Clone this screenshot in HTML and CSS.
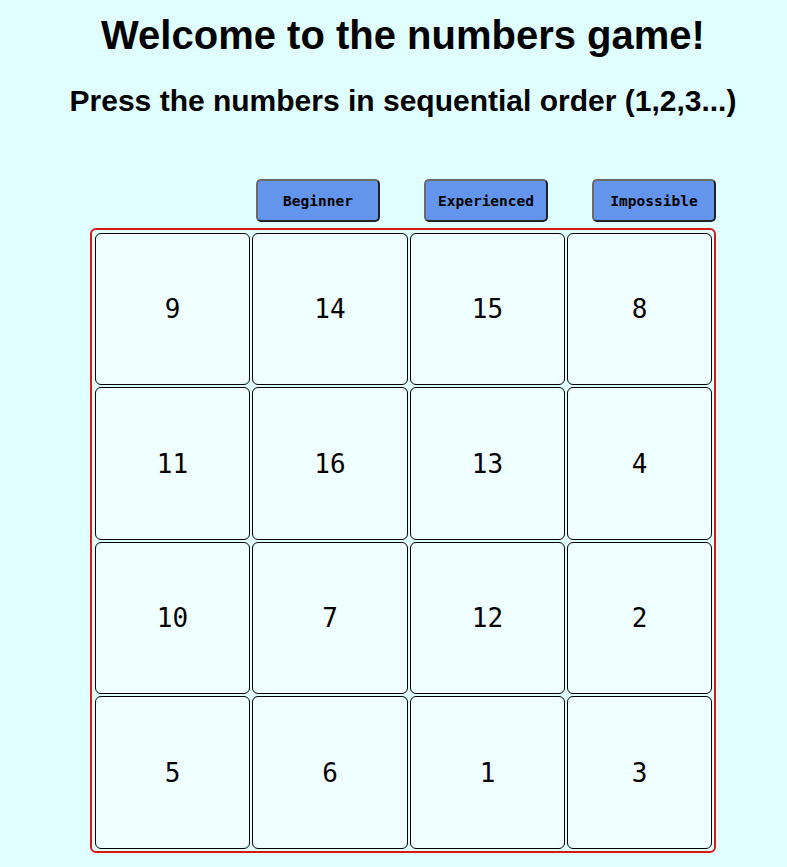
FILE: index.html
```html
<!DOCTYPE html>
<html>
<head>
<meta charset="utf-8">
<link rel="stylesheet" href="styles.css">
</head>
<body>
<div class="page">
  <h1 class="title">Welcome to the numbers game!</h1>
  <h2 class="subtitle">Press the numbers in sequential order (1,2,3...)</h2>
  <div class="levels">
    <button class="level">Beginner</button>
    <button class="level">Experienced</button>
    <button class="level">Impossible</button>
  </div>
  <div class="board">
    <div class="tile">9</div>
    <div class="tile">14</div>
    <div class="tile">15</div>
    <div class="tile">8</div>
    <div class="tile">11</div>
    <div class="tile">16</div>
    <div class="tile">13</div>
    <div class="tile">4</div>
    <div class="tile">10</div>
    <div class="tile">7</div>
    <div class="tile">12</div>
    <div class="tile">2</div>
    <div class="tile">5</div>
    <div class="tile">6</div>
    <div class="tile">1</div>
    <div class="tile">3</div>
  </div>
</div>
</body>
</html>
```

FILE: styles.css
```css
html, body {
  margin: 0;
  background: #e0ffff;
}
body {
  padding: 12px 0 0 19px;
  font-family: "Liberation Sans", Arial, sans-serif;
  color: #000;
}
.page {
  display: flex;
  flex-direction: column;
  align-items: center;
}
.title {
  margin: 0;
  font-size: 40px;
  line-height: 46px;
  font-weight: bold;
}
.subtitle {
  margin: 26px 0 0;
  font-size: 30px;
  line-height: 34px;
  font-weight: bold;
}
.levels {
  margin-top: 61px;
  width: 626px;
  display: flex;
  justify-content: flex-end;
  gap: 44px;
}
.level {
  width: 124px;
  height: 43px;
  margin: 0;
  padding: 0;
  background: #6495ed;
  border: 2px solid;
  border-color: #6a6a6a #222 #222 #6a6a6a;
  border-radius: 5px;
  font-family: "DejaVu Sans Mono", Consolas, monospace;
  font-weight: bold;
  font-size: 14.5px;
  color: #000;
}
.board {
  margin-top: 6px;
  box-sizing: border-box;
  width: 626px;
  border: 2px solid #d81818;
  border-radius: 6px;
  padding: 3px 2px 2px 3px;
  display: grid;
  grid-template-columns: 155px 156px 155px 145px;
  grid-template-rows: 152px 153px 152px 153px;
  gap: 2px;
}
.tile {
  box-sizing: border-box;
  background: #f0ffff;
  border: 1px solid #000;
  border-radius: 6px;
  display: flex;
  align-items: center;
  justify-content: center;
  font-family: "DejaVu Sans Mono", Consolas, monospace;
  font-size: 26px;
}
```
